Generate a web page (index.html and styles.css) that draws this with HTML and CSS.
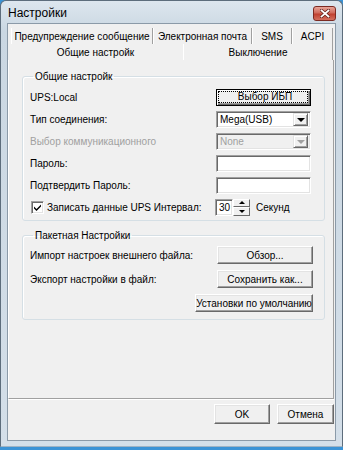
FILE: index.html
```html
<!DOCTYPE html>
<html lang="ru">
<head>
    <meta charset="UTF-8">
    <title>Настройки</title>
    <link rel="stylesheet" href="styles.css">
</head>
<body>
    <div class="window">
        <!-- Title bar -->
        <div class="titlebar">
            <span class="title">Настройки</span>
            <span class="close-btn">
                <svg width="10" height="9" viewBox="0 0 10 9">
                    <path d="M1.5 1.5 L8.5 7.5 M8.5 1.5 L1.5 7.5" stroke="#5a1d17" stroke-width="3.2" stroke-linecap="square"/>
                    <path d="M1.5 1.5 L8.5 7.5 M8.5 1.5 L1.5 7.5" stroke="#fff" stroke-width="1.8" stroke-linecap="square"/>
                </svg>
            </span>
        </div>

        <div class="client">
            <!-- Tabs -->
            <div class="tab-row back">
                <div class="tab t1">Предупреждение сообщение</div>
                <div class="tab t2">Электронная почта</div>
                <div class="tab t3">SMS</div>
                <div class="tab t4">ACPI</div>
            </div>
            <div class="tab-row front">
                <div class="tab active t5">Общие настройк</div>
                <div class="tab t6">Выключение</div>
            </div>

            <!-- Tab page -->
            <div class="panel">
                <fieldset class="group general">
                    <legend>Общие настройк</legend>
                    <div class="row">
                        <span class="label">UPS:Local</span>
                        <button class="btn default ctl"><span class="focus">Выбор ИБП</span></button>
                    </div>
                    <div class="row">
                        <span class="label">Тип соединения:</span>
                        <div class="select ctl">
                            <span class="value">Mega(USB)</span>
                            <span class="arrow"><i></i></span>
                        </div>
                    </div>
                    <div class="row">
                        <span class="label disabled">Выбор коммуникационного</span>
                        <div class="select ctl off">
                            <span class="value">None</span>
                            <span class="arrow"><i></i></span>
                        </div>
                    </div>
                    <div class="row">
                        <span class="label">Пароль:</span>
                        <div class="field ctl"></div>
                    </div>
                    <div class="row">
                        <span class="label">Подтвердить Пароль:</span>
                        <div class="field ctl"></div>
                    </div>
                    <div class="row">
                        <span class="check">
                            <svg width="9" height="9" viewBox="0 0 9 9">
                                <path d="M1 3.5 L3.5 6 L8 1.5 L8 3.5 L3.5 8 L1 5.5 Z" fill="#000"/>
                            </svg>
                        </span>
                        <span class="label check-label">Записать данные UPS Интервал:</span>
                        <div class="spin">
                            <div class="spin-field">30</div>
                            <div class="spin-btns">
                                <span class="spin-btn"><i class="up"></i></span>
                                <span class="spin-btn"><i class="down"></i></span>
                            </div>
                        </div>
                        <span class="unit">Секунд</span>
                    </div>
                </fieldset>

                <fieldset class="group batch">
                    <legend>Пакетная Настройки</legend>
                    <div class="row tall">
                        <span class="label">Импорт настроек внешнего файла:</span>
                        <button class="btn wide">Обзор...</button>
                    </div>
                    <div class="row tall">
                        <span class="label">Экспорт настройки в файл:</span>
                        <button class="btn wide">Сохранить как...</button>
                    </div>
                    <div class="row tall">
                        <span class="label"></span>
                        <button class="btn wider">Установки по умолчанию</button>
                    </div>
                </fieldset>
            </div>

            <!-- Dialog buttons -->
            <div class="dialog-buttons">
                <button class="btn ok">OK</button>
                <button class="btn cancel">Отмена</button>
            </div>
        </div>
    </div>
</body>
</html>
```

FILE: styles.css
```css
* {
    box-sizing: border-box;
}

body {
    margin: 0;
    background: #3b93d6;
    font-family: "Liberation Sans", Arial, sans-serif;
    font-size: 10px;
    color: #000;
}

/* Window frame */
.window {
    width: 343px;
    height: 447px;
    display: flex;
    flex-direction: column;
    padding: 0 6px 5px 6px;
    background: linear-gradient(#dde6ee, #cad7e2 30px, #d4dfe9);
    border: 1px solid #5d6d7c;
    border-bottom-color: #9fb3c4;
    border-radius: 6px 6px 0 0;
}

.titlebar {
    height: 22px;
    display: flex;
    align-items: center;
    justify-content: space-between;
}

.title {
    font-size: 12px;
    padding-left: 1px;
    padding-top: 1px;
}

.close-btn {
    width: 23px;
    height: 15px;
    margin-top: 2px;
    display: flex;
    align-items: center;
    justify-content: center;
    border: 1px solid #7c2a22;
    border-radius: 3px;
    background: linear-gradient(#e8a598, #d06a5c 45%, #c04030 55%, #d3705f);
}

.client {
    flex: 1;
    display: flex;
    flex-direction: column;
    background: #f0f0f0;
    border: 1px solid #8b9aa8;
}

/* Tabs */
.tab-row {
    display: flex;
    height: 16px;
}

.tab-row.back {
    margin-top: 4px;
    padding-left: 3px;
}

.tab {
    display: flex;
    align-items: center;
    justify-content: center;
    border-left: 1px solid #fff;
    border-right: 1px solid #a0a0a0;
    white-space: nowrap;
}

.t1 { width: 142px; }
.t2 { width: 99px; }
.t3 { width: 40px; }
.t4 { width: 41px; }
.t5 { width: 175px; border-left-color: #f0f0f0; border-right-color: #f0f0f0; }
.t6 { width: 150px; }

.tab-row.front .tab {
    padding-top: 1px;
}

/* Tab page */
.panel {
    height: 339px;
    margin-right: 1px;
    padding: 10px 8px 0 13px;
    border-left: 1px solid #fff;
    border-right: 1px solid #a0a0a0;
    border-bottom: 1px solid #a0a0a0;
    box-shadow: 0 1px 0 #fff;
}

/* Group boxes */
.group {
    margin: 0;
    border: 1px solid #d5dfe5;
    border-radius: 3px;
    box-shadow: inset 1px 1px 0 #fff;
    padding: 3px 0 2px 7px;
}

.group legend {
    padding: 0 2px;
    margin-left: 3px;
    line-height: 13px;
}

.group.batch {
    margin-top: 8px;
    padding: 1px 0 4px 7px;
}

.row {
    display: flex;
    align-items: center;
    height: 22px;
}

.row.tall {
    height: 24px;
}

.label {
    flex: 1;
    white-space: nowrap;
}

.label.disabled {
    color: #a0a0a0;
}

.ctl {
    width: 95px;
    height: 17px;
    margin-right: 13px;
}

/* Classic buttons */
.btn {
    font-family: inherit;
    font-size: 10px;
    color: #000;
    white-space: nowrap;
    background: #f0f0f0;
    padding: 0;
    border: 1px solid;
    border-color: #fff #696969 #696969 #fff;
    box-shadow: inset -1px -1px 0 #a0a0a0, inset 1px 1px 0 #e3e3e3;
}

.btn.default {
    border: 1px solid #000;
    box-shadow: inset 1px 1px 0 #fff, inset -1px -1px 0 #696969, inset -2px -2px 0 #a0a0a0;
    padding: 1px 2px 2px 1px;
    display: flex;
}

.btn .focus {
    flex: 1;
    display: flex;
    align-items: center;
    justify-content: center;
    border: 1px dotted #000;
    line-height: 10px;
    padding-left: 4px;
}

.btn.wide {
    width: 96px;
    height: 18px;
    margin-right: 11px;
}

.btn.wider {
    width: 118px;
    height: 18px;
    margin-right: 11px;
}

/* Sunken fields */
.field,
.select,
.spin-field,
.check {
    background: #fff;
    border: 1px solid;
    border-color: #a0a0a0 #fff #fff #a0a0a0;
    box-shadow: inset 1px 1px 0 #696969, inset -1px -1px 0 #e3e3e3;
}

.select {
    display: flex;
    align-items: center;
    padding: 2px 2px 2px 3px;
}

.select .value {
    flex: 1;
}

.select .arrow {
    width: 15px;
    height: 13px;
    display: flex;
    align-items: center;
    justify-content: center;
    background: #f0f0f0;
    border: 1px solid;
    border-color: #e3e3e3 #696969 #696969 #e3e3e3;
    box-shadow: inset 1px 1px 0 #fff, inset -1px -1px 0 #a0a0a0;
}

.select .arrow i {
    border-left: 4px solid transparent;
    border-right: 4px solid transparent;
    border-top: 4px solid #000;
    margin-top: 1px;
}

.select.off {
    background: #f0f0f0;
    color: #a0a0a0;
}

.select.off .arrow i {
    border-top-color: #a0a0a0;
}

/* Checkbox row */
.check {
    width: 13px;
    height: 13px;
    margin-left: 1px;
    display: flex;
    align-items: center;
    justify-content: center;
}

.check-label {
    flex: none;
    width: 171px;
    padding-left: 3px;
}

.spin {
    display: flex;
    height: 17px;
}

.spin-field {
    width: 18px;
    padding: 1px 0 0 3px;
    line-height: 13px;
}

.spin-btns {
    width: 17px;
    display: flex;
    flex-direction: column;
}

.spin-btn {
    flex: 1;
    display: flex;
    align-items: center;
    justify-content: center;
    background: #f0f0f0;
    border: 1px solid;
    border-color: #fff #696969 #696969 #fff;
}

.spin-btn i {
    border-left: 3px solid transparent;
    border-right: 3px solid transparent;
}

.spin-btn .up {
    border-bottom: 3px solid #000;
}

.spin-btn .down {
    border-top: 3px solid #000;
}

.unit {
    margin-left: 6px;
}

/* OK / Cancel */
.dialog-buttons {
    display: flex;
    justify-content: flex-end;
    gap: 7px;
    margin-top: 5px;
    margin-right: 1px;
}

.dialog-buttons .btn {
    height: 20px;
}

.btn.ok { width: 56px; }
.btn.cancel { width: 57px; }
```
